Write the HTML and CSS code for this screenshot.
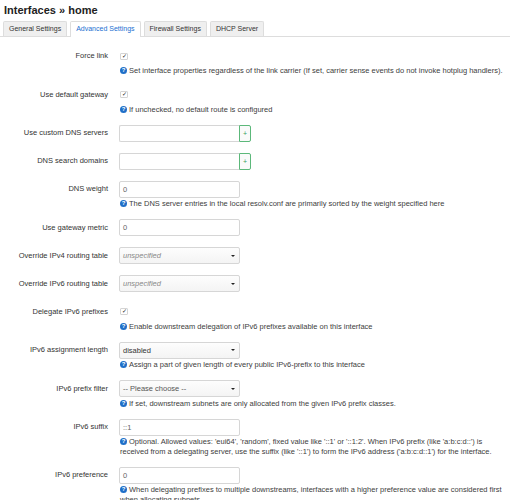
FILE: index.html
```html
<!DOCTYPE html>
<html>
<head>
<meta charset="utf-8">
<link rel="stylesheet" href="styles.css">
</head>
<body>
<h2 class="title">Interfaces » home</h2>
<ul class="tabs">
  <li class="tab">General Settings</li>
  <li class="tab active">Advanced Settings</li>
  <li class="tab">Firewall Settings</li>
  <li class="tab">DHCP Server</li>
</ul>
<div class="form">
  <div class="row">
    <label class="lbl">Force link</label>
    <div class="field">
      <div class="ctrl"><span class="cb">✓</span></div>
      <div class="help"><span class="qi">?</span>Set interface properties regardless of the link carrier (If set, carrier sense events do not invoke hotplug handlers).</div>
    </div>
  </div>
  <div class="row">
    <label class="lbl">Use default gateway</label>
    <div class="field">
      <div class="ctrl"><span class="cb">✓</span></div>
      <div class="help"><span class="qi">?</span>If unchecked, no default route is configured</div>
    </div>
  </div>
  <div class="row">
    <label class="lbl">Use custom DNS servers</label>
    <div class="field">
      <div class="ctrl"><span class="inp dyn"></span><span class="add">+</span></div>
    </div>
  </div>
  <div class="row">
    <label class="lbl">DNS search domains</label>
    <div class="field">
      <div class="ctrl"><span class="inp dyn"></span><span class="add">+</span></div>
    </div>
  </div>
  <div class="row">
    <label class="lbl">DNS weight</label>
    <div class="field">
      <div class="ctrl"><span class="inp">0</span></div>
      <div class="help"><span class="qi">?</span>The DNS server entries in the local resolv.conf are primarily sorted by the weight specified here</div>
    </div>
  </div>
  <div class="row">
    <label class="lbl">Use gateway metric</label>
    <div class="field">
      <div class="ctrl"><span class="inp">0</span></div>
    </div>
  </div>
  <div class="row">
    <label class="lbl">Override IPv4 routing table</label>
    <div class="field">
      <div class="ctrl"><span class="sel"><span class="ph">unspecified</span><span class="arr"></span></span></div>
    </div>
  </div>
  <div class="row">
    <label class="lbl">Override IPv6 routing table</label>
    <div class="field">
      <div class="ctrl"><span class="sel"><span class="ph">unspecified</span><span class="arr"></span></span></div>
    </div>
  </div>
  <div class="row">
    <label class="lbl">Delegate IPv6 prefixes</label>
    <div class="field">
      <div class="ctrl"><span class="cb">✓</span></div>
      <div class="help"><span class="qi">?</span>Enable downstream delegation of IPv6 prefixes available on this interface</div>
    </div>
  </div>
  <div class="row">
    <label class="lbl">IPv6 assignment length</label>
    <div class="field">
      <div class="ctrl"><span class="sel"><span class="val">disabled</span><span class="arr"></span></span></div>
      <div class="help"><span class="qi">?</span>Assign a part of given length of every public IPv6-prefix to this interface</div>
    </div>
  </div>
  <div class="row">
    <label class="lbl">IPv6 prefix filter</label>
    <div class="field">
      <div class="ctrl"><span class="sel"><span class="choose">-- Please choose --</span><span class="arr"></span></span></div>
      <div class="help"><span class="qi">?</span>If set, downstream subnets are only allocated from the given IPv6 prefix classes.</div>
    </div>
  </div>
  <div class="row">
    <label class="lbl">IPv6 suffix</label>
    <div class="field">
      <div class="ctrl"><span class="inp">::1</span></div>
      <div class="help"><span class="qi">?</span>Optional. Allowed values: 'eui64', 'random', fixed value like '::1' or '::1:2'. When IPv6 prefix (like 'a:b:c:d::') is received from a delegating server, use the suffix (like '::1') to form the IPv6 address ('a:b:c:d::1') for the interface.</div>
    </div>
  </div>
  <div class="row">
    <label class="lbl">IPv6 preference</label>
    <div class="field">
      <div class="ctrl"><span class="inp">0</span></div>
      <div class="help"><span class="qi">?</span>When delegating prefixes to multiple downstreams, interfaces with a higher preference value are considered first when allocating subnets.</div>
    </div>
  </div>
</div>
</body>
</html>
```

FILE: styles.css
```css
html, body {
  margin: 0;
  padding: 0;
  background: #fff;
}
body {
  font-family: "Liberation Sans", Arial, sans-serif;
  font-size: 7.5px;
  color: #404040;
  width: 510px;
  height: 500px;
  overflow: hidden;
}
.title {
  margin: 0;
  padding: 4px 0 0 4px;
  height: 13px;
  font-size: 11px;
  line-height: 13px;
  font-weight: bold;
  color: #222;
}
.tabs {
  list-style: none;
  margin: 4px 0 0 0;
  padding: 0 0 0 3px;
  display: flex;
  gap: 3px;
  border-bottom: 1px solid #ddd;
  height: 15px;
  font-size: 7px;
}
.tab {
  height: 15px;
  box-sizing: border-box;
  padding: 0 5px;
  line-height: 14px;
  border: 1px solid #ddd;
  border-bottom: none;
  border-radius: 2px 2px 0 0;
  background: #efefef;
  color: #333;
}
.tab.active {
  background: #fff;
  color: #1a6fd1;
  height: 16px;
}
.form {
  padding-top: 10px;
  padding-right: 4px;
}
.row {
  display: grid;
  grid-template-columns: 108px 1fr;
  column-gap: 11px;
  margin-bottom: 10px;
}
.lbl {
  text-align: right;
  line-height: 18px;
  color: #333;
  white-space: nowrap;
}
.field {
  min-width: 0;
}
.ctrl {
  height: 18px;
  display: flex;
  align-items: center;
}
.cb {
  width: 8px;
  height: 7px;
  box-sizing: border-box;
  border: 1px solid #d4d4d4;
  border-radius: 1px;
  font-size: 6px;
  line-height: 5px;
  text-align: center;
  color: #222;
  background: #fff;
  margin-left: 1px;
}
.inp {
  width: 121px;
  height: 17px;
  box-sizing: border-box;
  border: 1px solid #d6d6d6;
  border-radius: 2px;
  padding-left: 3px;
  line-height: 15px;
  color: #666;
  background: #fff;
}
.inp.dyn {
  width: 120px;
  border-right: none;
  border-radius: 2px 0 0 2px;
}
.add {
  width: 12px;
  height: 17px;
  box-sizing: border-box;
  border: 1px solid #5cb87a;
  border-radius: 0 2px 2px 0;
  color: #3aa05a;
  text-align: center;
  line-height: 15px;
  font-size: 7px;
  background: #fafafa;
}
.sel {
  width: 121px;
  height: 17px;
  box-sizing: border-box;
  border: 1px solid #d6d6d6;
  border-radius: 2px;
  padding: 0 4px 0 3px;
  display: flex;
  align-items: center;
  justify-content: space-between;
  background: linear-gradient(#fdfdfd, #f4f4f4);
}
.ph {
  font-style: italic;
  color: #888;
}
.val {
  color: #333;
}
.choose {
  color: #555;
}
.arr {
  width: 0;
  height: 0;
  border-left: 2px solid transparent;
  border-right: 2px solid transparent;
  border-top: 2px solid #222;
}
.help {
  margin-top: 1px;
  line-height: 9.5px;
  padding-left: 1px;
  color: #404040;
}
.qi {
  display: inline-block;
  width: 7px;
  height: 7px;
  border-radius: 50%;
  background: #1f6fc8;
  color: #fff;
  font-size: 6px;
  font-weight: bold;
  line-height: 7px;
  text-align: center;
  vertical-align: top;
  margin-top: 1px;
  margin-right: 2px;
}
```
